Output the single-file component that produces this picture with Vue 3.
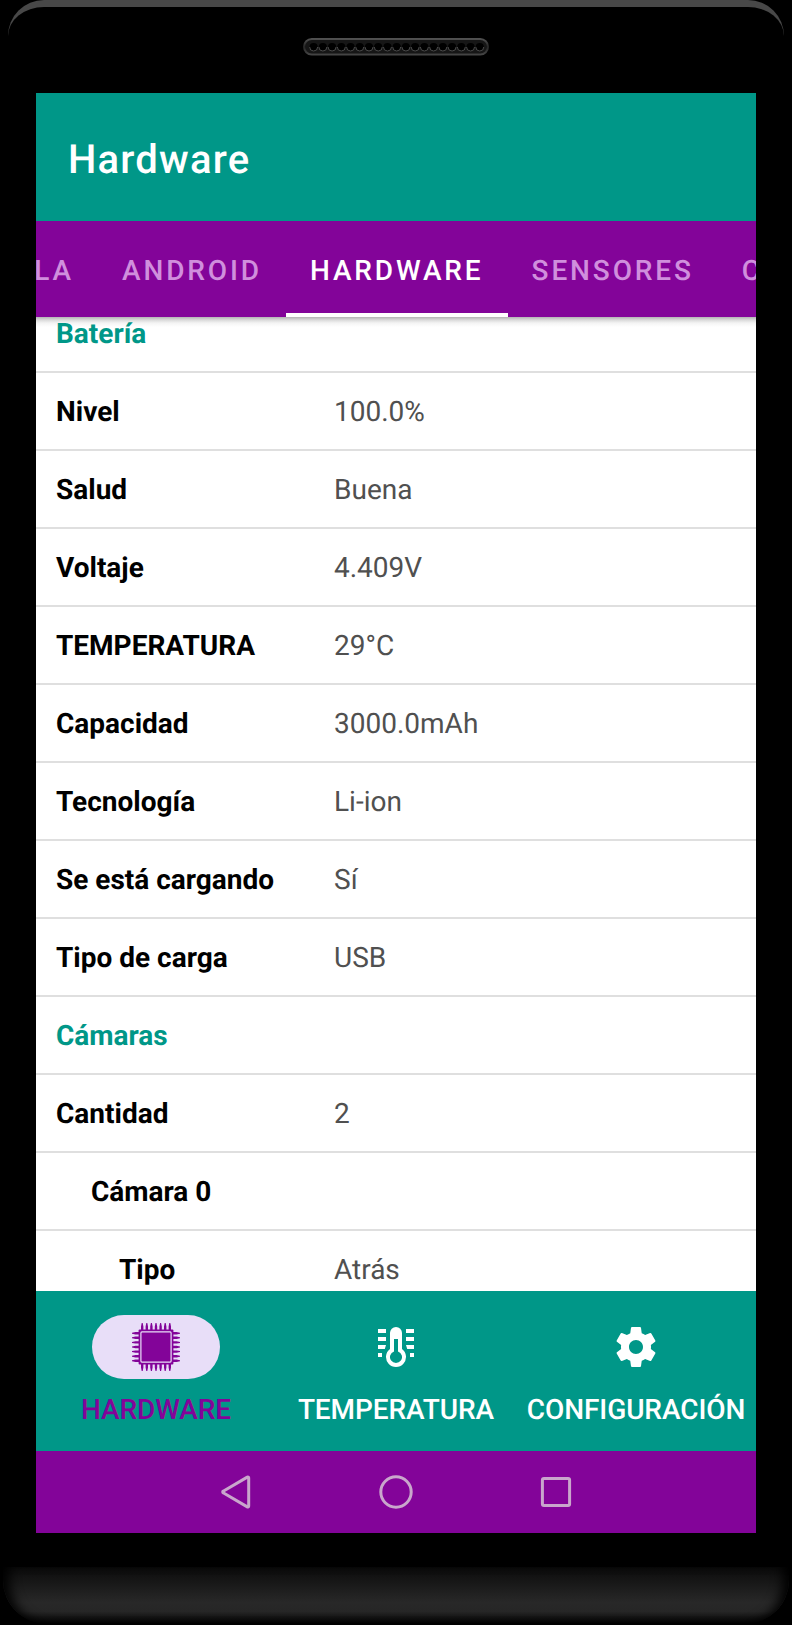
<template>
  <div class="phone">
    <div class="bezel-top">
      <svg class="speaker" width="186" height="18" viewBox="0 0 186 18">
        <defs>
          <linearGradient id="speaker-edge" x1="0" y1="0" x2="0" y2="1">
            <stop offset="0" stop-color="#505050" />
            <stop offset="0.5" stop-color="#262626" />
            <stop offset="1" stop-color="#444" />
          </linearGradient>
        </defs>
        <rect x="1" y="1" width="184" height="15.5" rx="7.75" fill="#161616" stroke="url(#speaker-edge)" stroke-width="2" />
        <g v-for="n in 19" :key="n">
          <circle :cx="1.4 + n * 9.23" cy="9" r="4.1" fill="#000" />
          <path
            :d="`M${1.4 + n * 9.23 - 4} 9a4 4 0 0 0 8 0`"
            fill="none"
            stroke="#4a4a4a"
            stroke-width="1"
          />
        </g>
      </svg>
    </div>

    <div class="screen">
      <header class="app-bar">
        <h1 class="app-title">Hardware</h1>
      </header>

      <nav class="tabs">
        <div
          v-for="tab in tabs"
          :key="tab.name"
          class="tab"
          :class="{ active: tab.name === activeTab, first: tab.first }"
        >
          {{ tab.name }}
        </div>
      </nav>

      <main class="list">
        <div v-for="(row, i) in rows" :key="i" class="row" :class="row.type">
          <span class="row-label">{{ row.label }}</span>
          <span v-if="row.value" class="row-value">{{ row.value }}</span>
        </div>
      </main>

      <nav class="bottom-nav">
        <div class="nav-item active">
          <span class="nav-pill">
            <svg width="48" height="48" viewBox="0 0 48 48">
              <g fill="currentColor">
                <path
                  v-for="angle in [0, 90, 180, 270]"
                  :key="angle"
                  :d="pins"
                  :transform="`rotate(${angle} 24 24)`"
                />
              </g>
              <rect x="6.6" y="6.6" width="34.8" height="34.8" rx="1" fill="currentColor" />
              <rect x="8.9" y="8.9" width="30.2" height="30.2" rx="1" fill="none" stroke="#e8def8" stroke-width="1.2" />
            </svg>
          </span>
          <span class="nav-label">HARDWARE</span>
        </div>
        <div class="nav-item">
          <span class="nav-pill">
            <svg width="48" height="48" viewBox="0 0 48 48">
              <g fill="currentColor">
                <path d="M6 6h8v4H6zM6 14h8v4H6zM6 22h8l-1.2 4H6zM6 30h4v4H6z" />
                <path d="M42 6h-8v4h8zM42 14h-8v4h8zM42 22h-8l1.2 4H42zM42 30h-4v4h4z" />
                <path
                  fill-rule="evenodd"
                  d="M18 26V10a6 6 0 0 1 12 0v16a10 10 0 1 1-12 0zM22 16v12.4a6 6 0 1 0 4 0V16z"
                />
              </g>
            </svg>
          </span>
          <span class="nav-label">TEMPERATURA</span>
        </div>
        <div class="nav-item">
          <span class="nav-pill">
            <svg width="48" height="48" viewBox="0 0 24 24">
              <path
                fill="currentColor"
                d="M19.43 12.98c.04-.32.07-.64.07-.98s-.03-.66-.07-.98l2.11-1.65c.19-.15.24-.42.12-.64l-2-3.46c-.12-.22-.39-.3-.61-.22l-2.49 1c-.52-.4-1.08-.73-1.69-.98l-.38-2.65C14.46 2.18 14.25 2 14 2h-4c-.25 0-.46.18-.49.42l-.38 2.65c-.61.25-1.17.59-1.69.98l-2.49-1c-.23-.09-.49 0-.61.22l-2 3.46c-.13.22-.07.49.12.64l2.11 1.65c-.04.32-.07.65-.07.98s.03.66.07.98l-2.11 1.65c-.19.15-.24.42-.12.64l2 3.46c.12.22.39.3.61.22l2.49-1c.52.4 1.08.73 1.69.98l.38 2.65c.03.24.24.42.49.42h4c.25 0 .46-.18.49-.42l.38-2.65c.61-.25 1.17-.59 1.69-.98l2.49 1c.23.09.49 0 .61-.22l2-3.46c.12-.22.07-.49-.12-.64l-2.11-1.65zM12 15.5c-1.93 0-3.5-1.57-3.5-3.5s1.57-3.5 3.5-3.5 3.5 1.57 3.5 3.5-1.57 3.5-3.5 3.5z"
              />
            </svg>
          </span>
          <span class="nav-label">CONFIGURACIÓN</span>
        </div>
      </nav>

      <div class="system-bar">
        <svg class="system-icon" viewBox="0 0 40 40">
          <path d="M32.7 5.8v28.4a.9.9 0 0 1-1.4.7L7.200 20.8a.9.9 0 0 1 0-1.6L31.3 5.1a.9.9 0 0 1 1.4.7z" />
        </svg>
        <svg class="system-icon" viewBox="0 0 40 40">
          <circle cx="20" cy="20" r="15.2" />
        </svg>
        <svg class="system-icon" viewBox="0 0 40 40">
          <rect x="6.4" y="6.4" width="27.2" height="27.2" rx="1.5" />
        </svg>
      </div>
    </div>

    <div class="bezel-bottom"></div>
  </div>
</template>

<script setup>
import { ref } from 'vue'

const activeTab = ref('HARDWARE')

const tabs = [
  { name: 'PANTALLA', first: true },
  { name: 'ANDROID' },
  { name: 'HARDWARE' },
  { name: 'SENSORES' },
  { name: 'CPU' }
]

const rows = [
  { label: 'Batería', type: 'section' },
  { label: 'Nivel', value: '100.0%' },
  { label: 'Salud', value: 'Buena' },
  { label: 'Voltaje', value: '4.409V' },
  { label: 'TEMPERATURA', value: '29°C' },
  { label: 'Capacidad', value: '3000.0mAh' },
  { label: 'Tecnología', value: 'Li-ion' },
  { label: 'Se está cargando', value: 'Sí' },
  { label: 'Tipo de carga', value: 'USB' },
  { label: 'Cámaras', type: 'section' },
  { label: 'Cantidad', value: '2' },
  { label: 'Cámara 0', type: 'level-1' },
  { label: 'Tipo', value: 'Atrás', type: 'level-2' }
]

// seven tapered pins on one side of the chip, rotated for the other sides
const pins = [-3, -2, -1, 0, 1, 2, 3]
  .map((n) => {
    const x = 24 + n * 4.6
    return `M${x - 1.2} 7V3.5L${x - 0.5} 0h1L${x + 1.2} 3.5V7z`
  })
  .join('')
</script>

<style>
body {
  margin: 0;
  background: #000;
}
</style>

<style scoped>
.phone {
  width: 792px;
  height: 1625px;
  display: flex;
  flex-direction: column;
  align-items: center;
  background: #000;
  font-family: Roboto, sans-serif;
  text-rendering: geometricPrecision;
  overflow: hidden;
}

.bezel-top {
  box-sizing: border-box;
  width: 776px;
  height: 93px;
  flex: none;
  padding-top: 31px;
  border-top: 7px solid #484848;
  border-radius: 36px 36px 0 0;
  display: flex;
  justify-content: center;
  align-items: flex-start;
}

.speaker {
  display: block;
}

.screen {
  width: 720px;
  height: 1440px;
  flex: none;
  display: flex;
  flex-direction: column;
  background: #fff;
  overflow: hidden;
}

.app-bar {
  height: 128px;
  flex: none;
  display: flex;
  align-items: center;
  padding: 0 32px;
  background: #009788;
}

.app-title {
  margin: 4px 0 0;
  color: #fff;
  font-size: 40px;
  font-weight: 500;
  letter-spacing: 1.2px;
}

.tabs {
  height: 96px;
  flex: none;
  display: flex;
  background: #830499;
  overflow: hidden;
}

.tab {
  box-sizing: border-box;
  flex: none;
  display: flex;
  align-items: center;
  padding: 6px 24px 0;
  border-bottom: 4px solid transparent;
  color: #d08fdd;
  font-size: 28px;
  font-weight: 500;
  letter-spacing: 2.87px;
}

.tab.first {
  width: 62px;
  padding-left: 0;
  justify-content: flex-end;
}

.tab.active {
  color: #fff;
  border-bottom-color: #fff;
}

.list {
  height: 974px;
  flex: none;
  overflow: hidden;
  display: flex;
  flex-direction: column;
  background: linear-gradient(#b4b4b4, #dadada 3px, #f4f4f4 6px, #fff 10px);
}

.row {
  box-sizing: border-box;
  height: 78px;
  flex: none;
  display: flex;
  align-items: center;
  padding: 0 20px;
  border-bottom: 2px solid #dfdfdf;
  font-size: 28px;
}

.row:first-child {
  margin-top: -22px;
}

.row-label {
  width: 278px;
  box-sizing: border-box;
  color: #000;
  font-weight: 700;
}

.row-value {
  color: #505050;
}

.section .row-label {
  color: #009788;
}

.level-1 .row-label {
  padding-left: 35px;
}

.level-2 .row-label {
  padding-left: 63px;
}

.bottom-nav {
  height: 160px;
  flex: none;
  display: flex;
  background: #009788;
}

.nav-item {
  width: 240px;
  display: flex;
  flex-direction: column;
  align-items: center;
  padding-top: 24px;
  color: #fff;
}

.nav-pill {
  width: 128px;
  height: 64px;
  border-radius: 32px;
  display: flex;
  align-items: center;
  justify-content: center;
}

.nav-label {
  margin-top: 14px;
  font-size: 28px;
  line-height: 33px;
  font-weight: 500;
  letter-spacing: -0.08px;
  white-space: nowrap;
}

.nav-item.active {
  color: #830499;
}

.nav-item.active .nav-pill {
  background: #e8def8;
}

.system-bar {
  height: 82px;
  flex: none;
  display: flex;
  align-items: center;
  justify-content: center;
  gap: 120px;
  background: #830499;
}

.system-icon {
  width: 40px;
  height: 40px;
  fill: none;
  stroke: #c9a6cc;
  stroke-width: 3;
  stroke-linejoin: round;
}

.bezel-bottom {
  width: 786px;
  height: 57px;
  flex: none;
  margin-top: 34px;
  border-radius: 0 0 44px 44px;
  background: linear-gradient(#0b0b0b, #282828 62%, #262626 78%, #000);
  box-shadow: inset 12px 0 12px -6px #000, inset -12px 0 12px -6px #000;
}
</style>
